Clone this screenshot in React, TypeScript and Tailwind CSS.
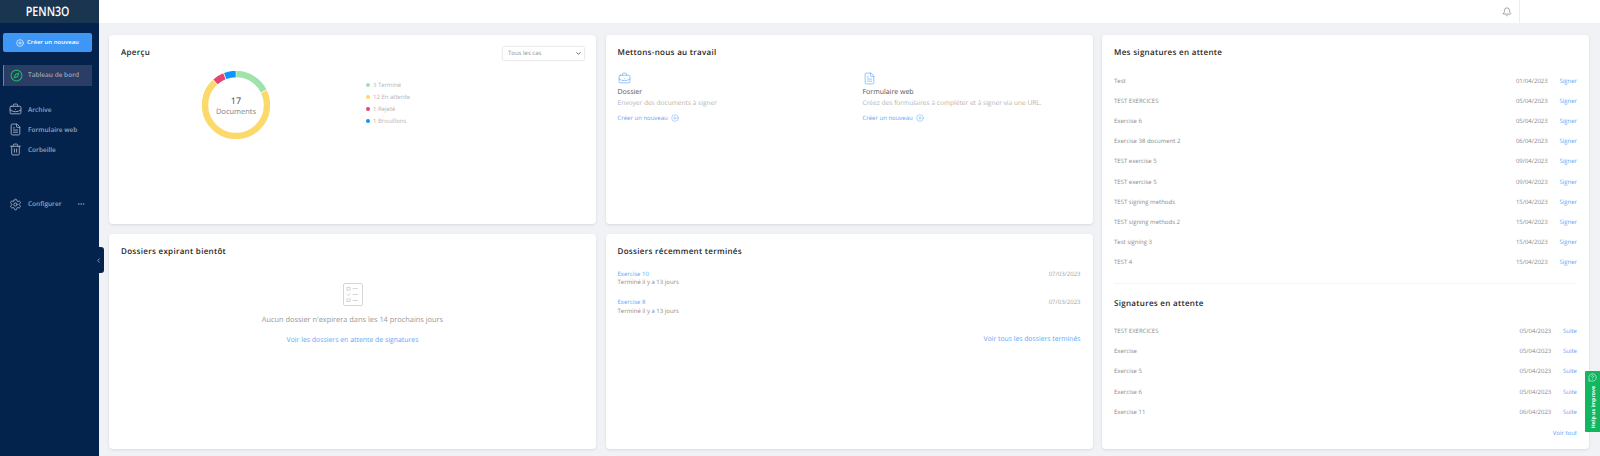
import { Bell, BriefcaseBusiness, ChevronDown, ChevronLeft, CirclePlus, Compass, Ellipsis, FileText, MessageCircleQuestion, Settings, Trash2 } from "lucide-react";

const mine = [
  ["Test", "01/04/2023"],
  ["TEST EXERCICES", "05/04/2023"],
  ["Exercise 6", "05/04/2023"],
  ["Exercise 38 document 2", "06/04/2023"],
  ["TEST exercise 5", "09/04/2023"],
  ["TEST exercise 5", "09/04/2023"],
  ["TEST signing methods", "15/04/2023"],
  ["TEST signing methods 2", "15/04/2023"],
  ["Test signing 3", "15/04/2023"],
  ["TEST 4", "15/04/2023"],
];
const others = [
  ["TEST EXERCICES", "05/04/2023"],
  ["Exercise", "05/04/2023"],
  ["Exercise 5", "05/04/2023"],
  ["Exercise 6", "05/04/2023"],
  ["Exercise 11", "06/04/2023"],
];
const legend = [
  ["3 Terminé", "bg-[#a0e2ac]"],
  ["12 En attente", "bg-[#fbd96b]"],
  ["1 Rejeté", "bg-[#e8446f]"],
  ["1 Brouillons", "bg-[#0a95ff]"],
];
const segments = [
  { color: "#a0e2ac", start: 0.5, len: 62.5 },
  { color: "#fbd96b", start: 64.5, len: 252.5 },
  { color: "#e8446f", start: 318.5, len: 19.5 },
  { color: "#0a95ff", start: 339.5, len: 20 },
];

function Title({ children }: { children: React.ReactNode }) {
  return <h2 className="h-3 text-[8px] leading-3 font-semibold tracking-[0.3px] text-[#262626]">{children}</h2>;
}

function Row({ name, date, action }: { name: string; date: string; action: string }) {
  return (
    <div className="flex h-[20.2px] items-center text-[6px] leading-3 text-[#8a8a8a]">
      <span className="flex-1">{name}</span>
      <span>{date}</span>
      <span className="ml-[11.7px] text-[#5ea6f7]">{action}</span>
    </div>
  );
}

function NavItem({ icon, label }: { icon: React.ReactNode; label: string }) {
  return (
    <div className="flex h-5 items-center text-[6.5px] font-semibold text-[#9aa6b8]">
      <span className="flex w-[27px] justify-center pl-[2px]">{icon}</span>
      <span>{label}</span>
    </div>
  );
}

function Start({ icon, title, text }: { icon: React.ReactNode; title: string; text: string }) {
  return (
    <div>
      {icon}
      <p className="mt-[2px] text-[7px] leading-[12px] text-[#555555]">{title}</p>
      <p className="text-[6.6px] leading-[8px] text-[#b3b3b3]">{text}</p>
      <p className="mt-[5px] flex items-center gap-[3px] text-[6px] leading-[12px] text-[#5ea6f7]">
        Créer un nouveau <CirclePlus size={8} strokeWidth={1.4} />
      </p>
    </div>
  );
}

function Done({ name }: { name: string }) {
  return (
    <div className="flex h-[28.6px] justify-between text-[6px] leading-[8.5px]">
      <div>
        <p className="text-[#5ea6f7]">{name}</p>
        <p className="text-[#8a8a8a]">Terminé il y a 13 jours</p>
      </div>
      <span className="text-[#a3a3a3]">07/03/2023</span>
    </div>
  );
}

const card = "rounded-[4px] bg-white px-3 pt-3 shadow-[0_1px_3px_rgba(0,0,0,0.1)]";

export default function App() {
  return (
    <div className="flex h-[456px] w-[1600px] overflow-hidden bg-[#f0f2f6] font-['Open_Sans',sans-serif] [text-rendering:geometricPrecision]">
      <aside className="relative flex w-[99px] shrink-0 flex-col bg-[#03224c]">
        <div className="flex h-[23px] items-center justify-center bg-[#1a3550] pr-[4px] text-white">
          <span className="inline-block scale-x-[0.82] text-[13px] font-semibold">PENN3O</span>
        </div>
        <button className="ml-[3px] mr-[7px] mt-[10px] flex h-[19px] items-center justify-center gap-[3px] rounded-[2px] bg-[#3f97f5] text-[6px] font-semibold text-white">
          <CirclePlus size={8} strokeWidth={2} />
          Créer un nouveau
        </button>
        <div className="ml-[3px] mr-[7px] mt-[13px] flex h-[20.5px] items-center border-l border-l-[#1fb865] bg-[#2a3d64] text-[6.5px] font-semibold text-[#9aa6b8]">
          <span className="flex w-[24px] justify-center">
            <Compass size={13} strokeWidth={2} className="text-[#1fb865]" />
          </span>
          <span>Tableau de bord</span>
        </div>
        <div className="mt-[14px] pl-px">
          <NavItem icon={<BriefcaseBusiness size={13} strokeWidth={1.8} />} label="Archive" />
          <NavItem icon={<FileText size={13} strokeWidth={1.8} />} label="Formulaire web" />
          <NavItem icon={<Trash2 size={13} strokeWidth={1.8} />} label="Corbeille" />
        </div>
        <div className="mt-[34.5px] flex items-center pl-px pr-[14px]">
          <div className="flex-1">
            <NavItem icon={<Settings size={13} strokeWidth={1.8} />} label="Configurer" />
          </div>
          <Ellipsis size={8} className="text-[#9aa6b8]" />
        </div>
        <div className="absolute left-[92px] top-[247px] flex h-[26px] w-[12px] items-center justify-center rounded-r-[3px] bg-[#03224c] text-[#9aa6b8]">
          <ChevronLeft size={7} strokeWidth={3} />
        </div>
      </aside>

      <div className="flex min-w-0 flex-1 flex-col">
        <header className="flex h-[23px] items-center justify-end bg-white">
          <Bell size={10} strokeWidth={1.6} className="text-[#777777]" />
          <span className="ml-[7px] h-full w-px bg-[#ebedf1]" />
          <span className="w-[80px]" />
        </header>

        <main className="grid flex-1 grid-cols-3 grid-rows-[189px_215px] gap-x-[9.5px] gap-y-[10px] pl-[10px] pr-[11px] pt-[12px]">
          <section className={card}>
            <div className="flex items-start justify-between">
              <Title>Aperçu</Title>
              <div className="flex h-[13px] w-[81px] items-center justify-between rounded-[1px] bg-white pl-[5px] pr-[2px] text-[6px] text-[#8f8f8f] shadow-[0_0_2px_rgba(0,0,0,0.3)]">
                Tous les cas
                <ChevronDown size={7} strokeWidth={3} className="text-[#555555]" />
              </div>
            </div>
            <div className="mt-[11px] flex items-start">
              <div className="relative ml-[81px] h-[68px] w-[68px]">
                <svg viewBox="0 0 68 68" className="h-[68px] w-[68px] -rotate-90">
                  {segments.map((s) => (
                    <circle key={s.color} cx="34" cy="34" r="31" fill="none" stroke={s.color} strokeWidth="6.4" pathLength={360} strokeDasharray={`${s.len} 360`} strokeDashoffset={-s.start} />
                  ))}
                </svg>
                <div className="absolute inset-0 flex flex-col items-center justify-center pt-[2px]">
                  <span className="text-[9px] leading-[12px] text-[#444444]">17</span>
                  <span className="text-[7.5px] leading-[11px] text-[#808080]">Documents</span>
                </div>
              </div>
              <ul className="ml-[96px] mt-[8px]">
                {legend.map(([t, c]) => (
                  <li key={t} className="flex h-3 items-center gap-[3.5px] text-[6px] text-[#b3b3b3]">
                    <span className={`h-[3.5px] w-[3.5px] rounded-full ${c}`} />
                    {t}
                  </li>
                ))}
              </ul>
            </div>
          </section>

          <section className={card}>
            <Title>Mettons-nous au travail</Title>
            <div className="mt-[13px] grid grid-cols-[245px_1fr]">
              <Start icon={<BriefcaseBusiness size={13} strokeWidth={1.2} className="text-[#5ea6f7]" />} title="Dossier" text="Envoyer des documents à signer" />
              <Start icon={<FileText size={13} strokeWidth={1.2} className="text-[#5ea6f7]" />} title="Formulaire web" text="Créez des formulaires à compléter et à signer via une URL." />
            </div>
          </section>

          <section className={`row-span-2 ${card}`}>
            <Title>Mes signatures en attente</Title>
            <div className="mt-[11.6px]">
              {mine.map(([n, d], i) => (
                <Row key={i} name={n} date={d} action="Signer" />
              ))}
            </div>
            <div className="mt-[10.5px] h-px bg-[#f3f4f6]" />
            <div className="mt-[14px]">
              <Title>Signatures en attente</Title>
            </div>
            <div className="mt-[11px]">
              {others.map(([n, d], i) => (
                <Row key={i} name={n} date={d} action="Suite" />
              ))}
            </div>
            <p className="mt-[5px] text-right text-[6px] leading-3 text-[#5ea6f7]">Voir tout</p>
          </section>

          <section className={card}>
            <Title>Dossiers expirant bientôt</Title>
            <div className="mt-[25px] flex flex-col items-center">
              <svg width="20" height="23" viewBox="0 0 20 23" fill="none" stroke="#d6d6d6" strokeWidth="1">
                <rect x="0.5" y="0.5" width="19" height="22" rx="1.5" />
                <rect x="4" y="4.5" width="3" height="2.5" />
                <path d="M9.5 5.7h5.5M4 11.5l1.2 1.2 2-2.4M9.5 11.5h5.5M9.5 17.5h5.5" />
                <rect x="4" y="16" width="3" height="2.5" />
              </svg>
              <p className="mt-[8px] text-[7.4px] leading-[12px] text-[#999999]">Aucun dossier n'expirera dans les 14 prochains jours</p>
              <p className="mt-[9px] text-[6.9px] leading-[12px] font-medium text-[#5ea6f7]">Voir les dossiers en attente de signatures</p>
            </div>
          </section>

          <section className={card}>
            <Title>Dossiers récemment terminés</Title>
            <div className="mt-[11.5px]">
              <Done name="Exercise 10" />
              <Done name="Exercise 8" />
            </div>
            <p className="mt-[6px] text-right text-[6.8px] leading-[12px] font-medium text-[#5ea6f7]">Voir tous les dossiers terminés</p>
          </section>
        </main>
      </div>

      <div className="absolute left-[1585px] top-[371px] flex h-[61px] w-[15px] flex-col items-center rounded-l-[1px] bg-[#12b65f] pt-[2px] text-white">
        <MessageCircleQuestion size={9} strokeWidth={1.5} className="shrink-0" />
        <span className="mt-[4px] rotate-180 whitespace-nowrap text-[5.2px] leading-[8px] font-bold [writing-mode:vertical-rl]">Help us improve</span>
      </div>
    </div>
  );
}
